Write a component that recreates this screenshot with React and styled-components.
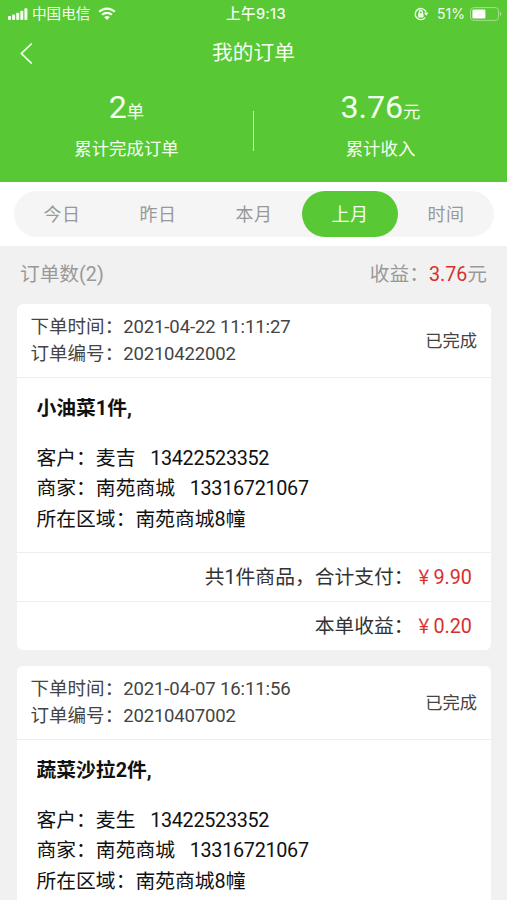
import styled, { createGlobalStyle } from 'styled-components';

const GlobalStyle = createGlobalStyle`
    * {
        box-sizing: border-box;
    }
    body {
        margin: 0;
        background-color: #f1f1f1;
        font-family: Roboto, "Liberation Sans", "Noto Sans CJK SC", sans-serif;
    }
`

const Page = styled.div`
        width: 100%;
        height: 900px;
        overflow: hidden;
        background-color: #f1f1f1;
`

const Head = styled.header`
        height: 182px;
        color: #f4fff0;
        background-color: #58c834;
`

const StatusBar = styled.div`
        height: 27px;
        padding: 0 5px 0 8px;
        display: grid;
        grid-template-columns: 1fr auto 1fr;
        align-items: center;
        font-size: 14.6px;
        line-height: 26px;
`

const StatusSide = styled.div`
        display: flex;
        align-items: center;
        justify-content: ${props => props.$end ? 'flex-end' : 'flex-start'};
        gap: ${props => props.$gap};
`

const Carrier = styled.span`
        padding-top: 1px;
        margin-right: 4px;
`

const Clock = styled.div`
        padding: 1px 0 0 2px;
        font-family: Inter, "Noto Sans CJK SC", sans-serif;
        font-size: 14.6px;
        font-weight: 500;
        letter-spacing: 0.3px;
`

const Percent = styled.span`
        font-family: Inter, sans-serif;
        font-size: 14px;
        margin-left: 3px;
`

const NavBar = styled.div`
        height: 50px;
        padding: 0 20px;
        display: grid;
        grid-template-columns: 1fr auto 1fr;
        align-items: center;
        svg {
            display: block;
        }
`

const NavTitle = styled.h1`
        margin: 0;
        padding-top: 2px;
        font-size: 20.7px;
        font-weight: 400;
        line-height: 49px;
`

const Stats = styled.div`
        display: flex;
        align-items: center;
        height: 107px;
`

const Stat = styled.div`
        flex: 1;
        text-align: center;
`

const StatValue = styled.div`
        height: 46px;
        font-size: 32.2px;
        line-height: 35px;
        letter-spacing: -0.1px;
        small {
            font-size: 17.4px;
            letter-spacing: 0;
        }
`

const StatLabel = styled.div`
        height: 36px;
        font-size: 17.4px;
        line-height: 27px;
`

const StatLine = styled.div`
        width: 1px;
        height: 40px;
        background-color: #c8f0b8;
`

const TabPanel = styled.div`
        height: 64px;
        padding: 9px 13px 9px 14px;
        background-color: #fff;
`

const Tabs = styled.div`
        height: 46px;
        display: flex;
        border-radius: 23px;
        background-color: #f5f5f5;
`

const Tab = styled.div`
        flex: 1;
        border-radius: 23px;
        text-align: center;
        font-size: 18px;
        line-height: 48px;
        letter-spacing: 0.4px;
        color: ${props => props.$active ? '#f4fff0' : '#999'};
        background-color: ${props => props.$active ? '#58c834' : 'transparent'};
`

const Summary = styled.div`
        height: 58px;
        padding: 0 20px 5px;
        display: flex;
        align-items: center;
        justify-content: space-between;
        font-size: 19.7px;
        color: #999;
`

const Red = styled.span`
        color: #d6302e;
`

const Yen = styled.span`
        display: inline-block;
        transform: scaleX(0.82);
        -webkit-text-stroke: 0.2px #d6302e;
`

const Digits = styled.span`
        letter-spacing: ${props => props.$tight || '-0.12px'};
`

const Card = styled.section`
        margin: 0 16px 16px 16.5px;
        overflow: hidden;
        border-radius: 6px;
        background-color: #fff;
`

const CardHead = styled.div`
        height: 74px;
        padding: 0 14px;
        display: flex;
        align-items: center;
        justify-content: space-between;
        border-bottom: 1px solid #eee;
        color: #444;
`

const OrderMeta = styled.div`
        font-size: 18.55px;
        line-height: 26.7px;
        padding-top: 1px;
`

const OrderState = styled.div`
        font-size: 17.3px;
        padding-bottom: 2px;
`

const CardBody = styled.div`
        height: 175px;
        padding: 16px 20px 0;
        border-bottom: 1px solid #eee;
        color: #111;
        font-size: 19.8px;
        line-height: 30.6px;
        white-space: pre;
`

const Goods = styled.div`
        margin-bottom: 19px;
        font-weight: 700;
`

const CardRow = styled.div`
        height: ${props => props.$last ? '48px' : '49px'};
        padding-right: 19px;
        border-bottom: ${props => props.$last ? 'none' : '1px solid #eee'};
        text-align: right;
        font-size: 19.8px;
        line-height: 50px;
        color: #333;
`

const tabs = ['今日', '昨日', '本月', '上月', '时间']

const orders = [
    {
        time: '2021-04-22 11:11:27',
        no: '20210422002',
        state: '已完成',
        goods: '小油菜1件,',
        customer: '麦吉',
        customerPhone: '13422523352',
        shop: '南苑商城',
        shopPhone: '13316721067',
        area: '南苑商城8幢',
        bill: { count: 1, total: '9.90', income: '0.20' },
    },
    {
        time: '2021-04-07 16:11:56',
        no: '20210407002',
        state: '已完成',
        goods: '蔬菜沙拉2件,',
        customer: '麦生',
        customerPhone: '13422523352',
        shop: '南苑商城',
        shopPhone: '13316721067',
        area: '南苑商城8幢',
    },
]

const SignalIcon = () => (
    <svg width="20" height="14" viewBox="0 0 20 14" fill="#f4fff0">
        <rect x="0" y="9" width="3" height="4" rx="0.8" />
        <rect x="4.1" y="7.6" width="3" height="5.4" rx="0.8" />
        <rect x="8.2" y="5.8" width="3" height="7.2" rx="0.8" />
        <rect x="12.3" y="3.8" width="3" height="9.2" rx="0.8" />
        <rect x="16.4" y="1.2" width="3" height="11.8" rx="0.8" />
    </svg>
)

const WifiIcon = () => (
    <svg width="18" height="14" viewBox="0 0 18 14" fill="none" stroke="#f4fff0" strokeWidth="2.2">
        <path d="M1.2 4.8 C5.6 0.5 12.4 0.5 16.8 4.8" />
        <path d="M4.1 7.8 C6.9 5.1 11.1 5.1 13.9 7.8" />
        <path d="M9 13 L6.2 10.2 C7.8 8.6 10.2 8.6 11.8 10.2 Z" fill="#f4fff0" stroke="none" />
    </svg>
)

const LockIcon = () => (
    <svg width="15" height="14" viewBox="0 0 15 14" fill="none" stroke="#f4fff0" strokeWidth="1.3">
        <path d="M11.2 10.6 A5.6 5.6 0 1 1 12.2 5.6" />
        <path d="M10 5.8 H14.4 L12.2 8.8 Z" fill="#f4fff0" stroke="none" />
        <rect x="4.1" y="6.2" width="5.4" height="4.2" rx="0.5" fill="#f4fff0" stroke="none" />
        <path d="M5.3 6.6 V5 A1.5 1.5 0 0 1 8.3 5 V6.6" />
    </svg>
)

const BatteryIcon = () => (
    <svg width="32" height="14" viewBox="0 0 32 14">
        <rect x="0.5" y="0.6" width="28" height="12.8" rx="3.2" fill="none" stroke="#a5e08c" />
        <rect x="2.4" y="2.5" width="13" height="9" rx="1.2" fill="#fff" />
        <path d="M30 5 C31.6 5.5 31.6 8.5 30 9 Z" fill="#b5e8a0" />
    </svg>
)

const BackIcon = () => (
    <svg width="13" height="22" viewBox="0 0 13 22" fill="none" stroke="#f4fff0" strokeWidth="1.7">
        <path d="M11.8 1.5 L1.4 11.5 L11.8 21.5" />
    </svg>
)

const Money = ({ value }) => (
    <Red><Yen>￥</Yen>{value}</Red>
)

const OrderCard = ({ order }) => {
    return (
        <Card>
            <CardHead>
                <OrderMeta>
                    <div>下单时间：<Digits>{order.time}</Digits></div>
                    <div>订单编号：<Digits $tight="-0.18px">{order.no}</Digits></div>
                </OrderMeta>
                <OrderState>{order.state}</OrderState>
            </CardHead>
            <CardBody>
                <Goods>{order.goods}</Goods>
                <div>客户：{order.customer}{'   '}<Digits $tight="-0.3px">{order.customerPhone}</Digits></div>
                <div>商家：{order.shop}{'   '}<Digits $tight="-0.3px">{order.shopPhone}</Digits></div>
                <div>所在区域：{order.area}</div>
            </CardBody>
            {
                order.bill &&
                    <>
                        <CardRow>共{order.bill.count}件商品，合计支付：<Money value={order.bill.total} /></CardRow>
                        <CardRow $last>本单收益：<Money value={order.bill.income} /></CardRow>
                    </>
            }
        </Card>
    )
}

const App = () => {
    return (
        <>
            <GlobalStyle />
            <Page>
                <Head>
                    <StatusBar>
                        <StatusSide $gap="4px">
                            <SignalIcon />
                            <Carrier>中国电信</Carrier>
                            <WifiIcon />
                        </StatusSide>
                        <Clock>上午9:13</Clock>
                        <StatusSide $end $gap="5px">
                            <LockIcon />
                            <Percent>51%</Percent>
                            <BatteryIcon />
                        </StatusSide>
                    </StatusBar>
                    <NavBar>
                        <BackIcon />
                        <NavTitle>我的订单</NavTitle>
                    </NavBar>
                    <Stats>
                        <Stat>
                            <StatValue>2<small>单</small></StatValue>
                            <StatLabel>累计完成订单</StatLabel>
                        </Stat>
                        <StatLine />
                        <Stat>
                            <StatValue>3.76<small>元</small></StatValue>
                            <StatLabel>累计收入</StatLabel>
                        </Stat>
                    </Stats>
                </Head>
                <TabPanel>
                    <Tabs>
                        {tabs.map(name => <Tab key={name} $active={name === '上月'}>{name}</Tab>)}
                    </Tabs>
                </TabPanel>
                <Summary>
                    <span>订单数({orders.length})</span>
                    <span>收益：<Red>3.76</Red>元</span>
                </Summary>
                {orders.map(order => <OrderCard key={order.no} order={order} />)}
            </Page>
        </>
    )
}

export default App;
